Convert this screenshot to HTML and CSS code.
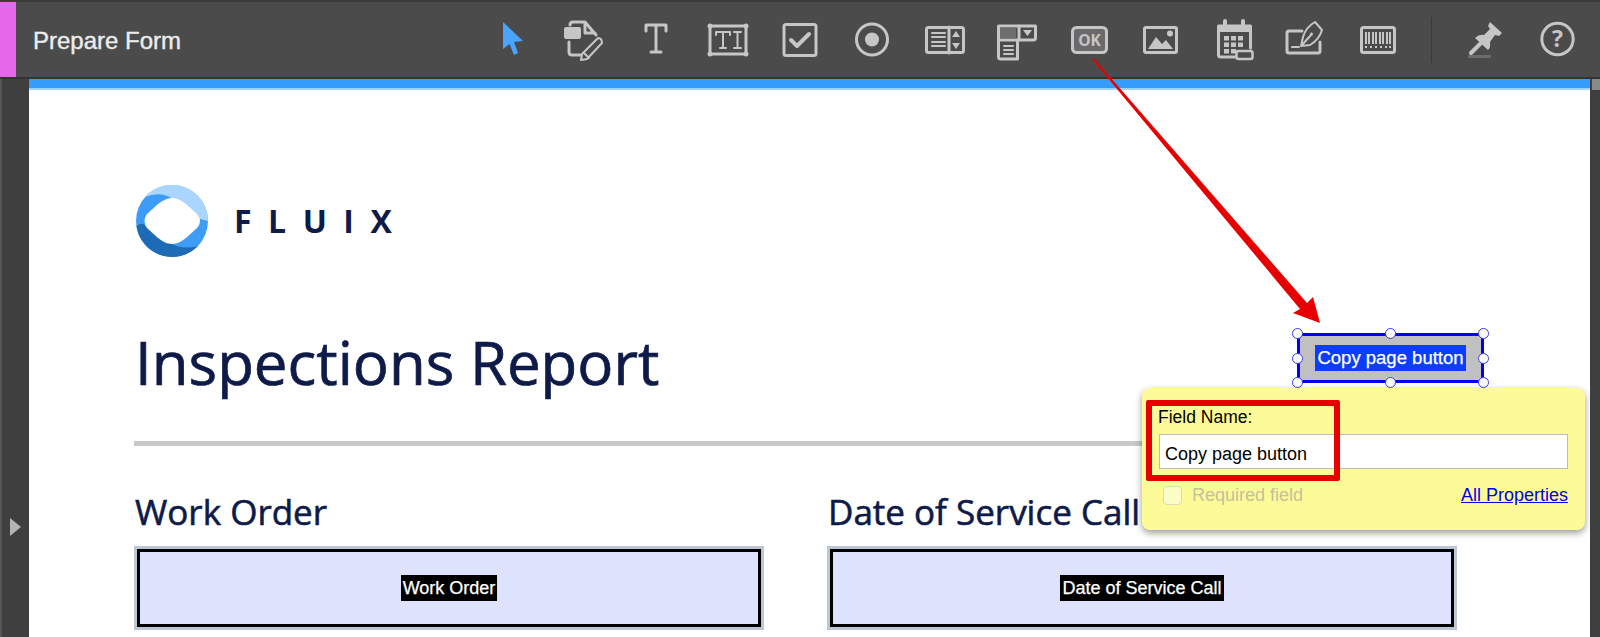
FILE: index.html
```html
<!DOCTYPE html>
<html lang="en">
<head>
<meta charset="utf-8">
<title>Prepare Form</title>
<link rel="stylesheet" href="styles.css">
</head>
<body>
<div class="app">
  <header class="toolbar">
    <div class="accent"></div>
    <h1 class="tool-title">Prepare Form</h1>
    <div class="tools">
      <svg class="icon" viewBox="0 0 44 44"><path class="cursor" d="M13 4 L33 23 L24 24 L28 35 L24 37 L19.500 26 L13 31 Z"/></svg>
      <svg class="icon" viewBox="0 0 44 44"><rect class="solid" x="2" y="9" width="17" height="12" rx="2"/><path class="line" d="M8 7 Q8 4 11 4 H23 L34 17 M23 4 V15 H33"/><path class="line" d="M7 24 V34 Q7 37 10 37 H18"/><path class="thin" d="M36 20 Q40 20 40 25 L25 41 L19 42 L20 36 Z M22 35 L27 40"/></svg>
      <svg class="icon" viewBox="0 0 44 44"><path class="line" d="M12 13 V7 H32 V13 M22 7 V34 M17 34 H27"/></svg>
      <svg class="icon" viewBox="0 0 44 44"><rect class="line" x="4" y="8" width="36" height="28"/><circle class="dot" cx="4" cy="8" r="2.500"/><circle class="dot" cx="40" cy="8" r="2.500"/><circle class="dot" cx="4" cy="36" r="2.500"/><circle class="dot" cx="40" cy="36" r="2.500"/><path class="thin" d="M10 17 V14 H24 V17 M17 14 V30 M14 30 H20 M28 14 H35 M31.500 14 V30 M28 30 H35"/></svg>
      <svg class="icon" viewBox="0 0 44 44"><rect class="line" x="6" y="6.500" width="32" height="31" rx="2"/><path class="heavy" d="M13 22 L19 28 L31 16"/></svg>
      <svg class="icon" viewBox="0 0 44 44"><circle class="line" cx="22" cy="21.500" r="15.500"/><circle class="dot" cx="22" cy="21.500" r="7"/></svg>
      <svg class="icon" viewBox="0 0 44 44"><rect class="line" x="4.500" y="9.500" width="37" height="25" rx="2"/><path class="line" d="M27 9 V35"/><path class="thin" d="M10 15 H23 M10 19 H23 M10 24 H23 M10 28 H23"/><path class="solid" d="M34 13 L38 19 H30 Z M34 31 L30 25 H38 Z"/></svg>
      <svg class="icon" viewBox="0 0 44 44"><path class="line" d="M4.500 22 V8 H41.500 V20 Q41.500 22 39 22 H4.500 V39 Q4.500 41 7 41 H23.500 V22"/><rect class="muted" x="6" y="9.500" width="16" height="11"/><path class="line" d="M25 8 V22"/><path class="solid" d="M29 12 H38 L33.500 18 Z"/><path class="thin" d="M10 28 H19 M10 32 H19 M10 36 H19"/></svg>
      <svg class="icon" viewBox="0 0 44 44"><rect class="ok-box" x="6.500" y="9.500" width="34" height="25" rx="4"/><text class="ok-text" x="23.500" y="27.500">OK</text></svg>
      <svg class="icon" viewBox="0 0 44 44"><rect class="line" x="6.500" y="9.500" width="32" height="25" rx="1.500"/><circle class="dot" cx="32" cy="15.500" r="3"/><path class="solid" d="M10 31 L18 19 L24 26 L28 22 L35 31 Z"/></svg>
      <svg class="icon" viewBox="0 0 44 44"><path class="line" d="M8.500 8 H40.500 V30 M8.500 8 V37 Q8.500 39 11 39 H25"/><path class="solid" d="M8 7 H41 V14 H8 Z"/><path class="heavy" d="M15 3 V8 M33 3 V8"/><path class="solid" d="M14 18 h5 v4.500 h-5z M21 18 h5 v4.500 h-5z M28 18 h5 v4.500 h-5z M14 24.500 h5 v4.500 h-5z M21 24.500 h5 v4.500 h-5z M28 24.500 h5 v4.500 h-5z M14 31 h5 v4.500 h-5z M21 31 h5 v4.500 h-5z"/><rect class="tag" x="26.500" y="33" width="16" height="8" rx="2"/></svg>
      <svg class="icon" viewBox="0 0 44 44"><path class="line" d="M20 13 H7 Q5 13 5 15 V33 Q5 35 7 35 H36 Q38 35 38 33 V24"/><path class="thin" d="M10 29 H17"/><path class="thin" d="M33 4 L40 12 Q37 22 28 27 L19 28 L21 19 Q24 9 33 4 Z M20 27 L29 17"/><circle class="dot" cx="29.500" cy="16" r="1.500"/></svg>
      <svg class="icon" viewBox="0 0 44 44"><rect class="line" x="7.500" y="9.500" width="33" height="25" rx="2"/><path class="bars" d="M12 14 V26 M15 14 V26 M19 14 V26 M22 14 V26 M26 14 V26 M29 14 V26 M33 14 V26 M36 14 V26"/><path class="bars" d="M12 28 V30 M17 28 V30 M22 28 V30 M27 28 V30 M32 28 V30 M36 28 V30"/></svg>
      <div class="tool-sep"></div>
      <svg class="icon" viewBox="0 0 44 44"><path class="solid" d="M27 4 L39 15 L36 18 L32 17 L27 24 Q28 29 25 32 L12 20 Q16 16 21 17 L27 11 L25 8 Z"/><path class="heavy" d="M17 26 L8 35"/><rect class="under" x="5" y="37" width="23" height="3" rx="1"/></svg>
      <svg class="icon" viewBox="0 0 44 44"><circle class="line" cx="22.500" cy="21" r="15.700"/><text class="help-text" x="22.500" y="29">?</text></svg>
    </div>
  </header>

  <div class="workspace">
    <aside class="rail"><span class="rail-arrow"></span></aside>
    <main class="page">
      <div class="page-bar"></div>
      <div class="page-body">
        <div class="brand">
          <svg class="brand-mark" viewBox="0 0 72 72">
            <circle cx="36" cy="36" r="36" fill="#3d9df6"/>
            <path fill="#a9d5ff" d="M9 12 A36 36 0 0 1 72 36 L64 34 Q50 22 36 13.500 Q24 6 9 12 Z"/>
            <path fill="#1d6bb4" d="M0.500 41 Q5 37 9 40 Q22 52 36 59 Q48 65 62 61 A36 36 0 0 1 0.500 41 Z"/>
            <path fill="#fff" d="M36 13 C41 13 46 16 50 19 L61 29 Q67 36 61 43 L50 53 C46 56 41 59 36 59 C31 59 26 56 22 53 L11 43 Q6 36 11 29 L22 19 C26 16 31 13 36 13 Z"/>
          </svg>
          <span class="brand-name">FLUIX</span>
        </div>
        <h2 class="report-title">Inspections Report</h2>
        <hr class="rule">
        <div class="fields">
          <section class="field-col">
            <h3 class="field-heading">Work Order</h3>
            <div class="field-box"><div class="field-inner"><span class="field-tag">Work Order</span></div></div>
          </section>
          <section class="field-col">
            <h3 class="field-heading">Date of Service Call</h3>
            <div class="field-box"><div class="field-inner"><span class="field-tag">Date of Service Call</span></div></div>
          </section>
        </div>
      </div>
    </main>
    <aside class="scroll"><span class="scroll-thumb"></span></aside>
  </div>

  <div class="copy-button">
    <span class="copy-label">Copy page button</span>
    <i class="handle h-tl"></i><i class="handle h-tc"></i><i class="handle h-tr"></i>
    <i class="handle h-ml"></i><i class="handle h-mr"></i>
    <i class="handle h-bl"></i><i class="handle h-bc"></i><i class="handle h-br"></i>
  </div>

  <div class="popup">
    <label class="popup-label">Field Name:</label>
    <div class="popup-input">Copy page button</div>
    <div class="popup-foot">
      <span class="required"><span class="required-box"></span>Required field</span>
      <a class="all-props" href="#">All Properties</a>
    </div>
  </div>
  <div class="callout"></div>

  <svg class="arrow" viewBox="0 0 1600 637">
    <path fill="#e60000" d="M1092 59 L1093.500 58 L1307 303 L1313 297 L1320 323 L1293 313 L1300 309 Z"/>
  </svg>
</div>
</body>
</html>
```

FILE: styles.css
```css
* { box-sizing: border-box; }
html, body { margin: 0; padding: 0; }
body { width: 1600px; height: 637px; overflow: hidden; background: #3f3f3f; }

.app { position: relative; width: 1600px; height: 637px; display: flex; flex-direction: column; overflow: hidden; }

.toolbar {
  display: flex; align-items: center; height: 79px; flex: none;
  background: #4b4b4b; border-top: 2px solid #3a3a3a; border-bottom: 2px solid #333;
}
.accent { width: 16px; align-self: stretch; background: #e567ea; flex: none; }
.tool-title {
  margin: 2px 0 0 17px; width: 443px; flex: none;
  font: 400 24px "Liberation Sans", Arial, sans-serif; color: #ececec;
  -webkit-text-stroke: 0.4px #ececec;
}
.tools { display: flex; align-items: center; }
.icon { width: 44px; height: 44px; margin: 0 14px; flex: none; overflow: visible; }
.tool-sep { width: 1px; height: 46px; margin: 0 17px 0 19px; background: #3a3a3a; flex: none; }

.cursor { fill: #4aa3ff; }
.line { fill: none; stroke: #c6c6c6; stroke-width: 3; stroke-linecap: round; stroke-linejoin: round; }
.thin { fill: none; stroke: #c6c6c6; stroke-width: 2; stroke-linecap: round; stroke-linejoin: round; }
.heavy { fill: none; stroke: #c6c6c6; stroke-width: 4; stroke-linecap: round; stroke-linejoin: round; }
.solid, .dot { fill: #c6c6c6; }
.muted { fill: #6e6e6e; }
.ok-box { fill: #6a6a6a; stroke: #c6c6c6; stroke-width: 3; }
.ok-text { font: 700 15.500px "Open Sans", sans-serif; fill: #c6c6c6; text-anchor: middle; }
.tag { fill: #4b4b4b; stroke: #c6c6c6; stroke-width: 2.500; }
.bars { fill: none; stroke: #c6c6c6; stroke-width: 2; }
.under { fill: #6c6c6c; }
.help-text { font: 700 23px "Open Sans", sans-serif; fill: #c6c6c6; text-anchor: middle; }

.workspace { flex: 1; display: flex; min-height: 0; }
.rail { width: 29px; flex: none; background: #3f3f3f; border-left: 2px solid #555; padding: 439px 0 0 8px; }
.rail-arrow { display: block; width: 0; height: 0; border-left: 11px solid #b4b4b4; border-top: 9.500px solid transparent; border-bottom: 9.500px solid transparent; }

.page { flex: 1; background: #fff; min-width: 0; }
.page-bar { height: 11px; background: #349dfb; border-bottom: 2px solid #9fd2fd; }
.page-body { padding: 94px 0 0 105px; }

.brand { display: flex; align-items: center; margin-left: 2px; height: 73px; }
.brand-mark { width: 72px; height: 72px; flex: none; }
.brand-name { margin-left: 26px; font: 700 32px/1 "Open Sans", sans-serif; letter-spacing: 16.500px; color: #0e1a48; }

.report-title { margin: 65px 0 0 1px; font: 400 60px/80px "Open Sans", sans-serif; color: #0e1a48; -webkit-text-stroke: 0.7px #0e1a48; }
.rule { margin: 39px 0 0 0; width: 1040px; height: 5px; border: 0; background: #c8c8c8; }

.fields { display: flex; gap: 63px; margin-top: 43px; }
.field-col { width: 630px; }
.field-heading { margin: 0 0 12px 1px; font: 400 35px/45px "Open Sans", sans-serif; color: #0e1a48; -webkit-text-stroke: 0.6px #0e1a48; }
.field-box { height: 84px; border: 3px solid #bcc6d4; }
.field-inner { height: 100%; display: flex; align-items: center; justify-content: center; background: #dde3fd; border: 3px solid #000; }
.field-tag { background: #000; color: #fff; font: 400 18px/26px "Liberation Sans", Arial, sans-serif; padding: 0 2px; -webkit-text-stroke: 0.25px #fff; }

.copy-button {
  position: absolute; left: 1297px; top: 333px; width: 187px; height: 50px;
  background: #c0c0c0; border: 3px solid #0000f5;
  display: flex; align-items: center; justify-content: center;
}
.copy-label { background: #0b3dfb; color: #fff; font: 400 18.500px/26px "Liberation Sans", Arial, sans-serif; padding: 0 2px; -webkit-text-stroke: 0.25px #fff; }
.handle { position: absolute; width: 11px; height: 11px; border-radius: 50%; background: #fff; border: 1px solid #3a3af5; }
.h-tl { left: -8px; top: -8px; }
.h-tc { left: 85px; top: -8px; }
.h-tr { right: -8px; top: -8px; }
.h-ml { left: -8px; top: 17px; }
.h-mr { right: -8px; top: 17px; }
.h-bl { left: -8px; bottom: -8px; }
.h-bc { left: 85px; bottom: -8px; }
.h-br { right: -8px; bottom: -8px; }

.popup {
  position: absolute; left: 1142px; top: 388px; width: 443px; height: 142px;
  background: #fdfb97; border-radius: 8px; box-shadow: 0 3px 7px rgba(0,0,0,.4);
  padding: 20px 17px 0 16px;
  font-family: "Liberation Sans", Arial, sans-serif; color: #000;
}
.popup-label { display: block; font-size: 17.500px; line-height: 19px; }
.popup-input {
  height: 35px; margin: 7px 0 0 1px; background: #fff; border: 1px solid #bbb;
  font-size: 18px; line-height: 38px; padding-left: 5px;
}
.popup-foot { display: flex; justify-content: space-between; align-items: center; margin-top: 15px; font-size: 18px; line-height: 22px; }
.required { display: flex; align-items: center; color: #c3c19c; margin-left: 5px; }
.required-box { width: 19px; height: 19px; margin-right: 10px; background: #fdfdc8; border: 1px solid #dcdcb4; border-radius: 4px; }
.all-props { color: #0000ee; text-decoration: underline; }

.callout { position: absolute; left: 1146px; top: 400px; width: 194px; height: 81px; border: 6px solid #e60000; border-radius: 2px; }
.arrow { position: absolute; left: 0; top: 0; width: 1600px; height: 637px; pointer-events: none; }

.scroll { width: 10px; flex: none; background: #3f3f3f; padding-left: 2px; }
.scroll-thumb { display: block; width: 8px; height: 11px; background: #8a8a8a; }
```
